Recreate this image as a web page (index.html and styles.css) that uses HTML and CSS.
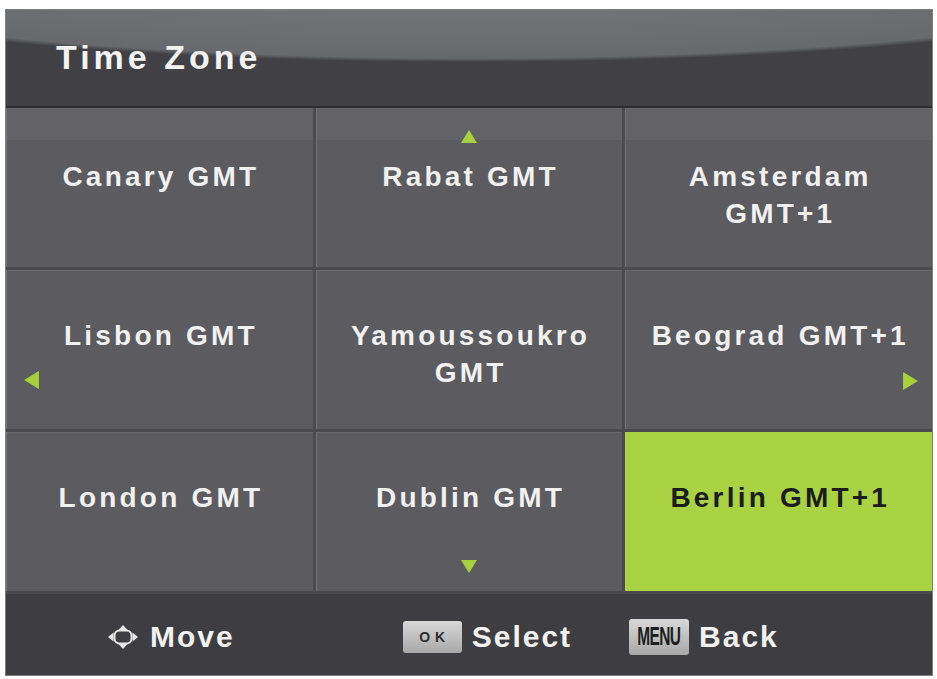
FILE: index.html
```html
<!DOCTYPE html>
<html lang="en">
<head>
<meta charset="utf-8">
<title>Time Zone</title>
<link rel="stylesheet" href="styles.css">
</head>
<body>
<div class="panel">
  <header class="head">
    <h1 class="title">Time Zone</h1>
  </header>
  <div class="grid">
    <div class="cell top">Canary GMT</div>
    <div class="cell top">Rabat GMT
      <svg class="arrow up" viewBox="0 0 16 13"><polygon points="8,0 16,13 0,13"/></svg>
    </div>
    <div class="cell top">Amsterdam<br>GMT+1</div>
    <div class="cell">Lisbon GMT
      <svg class="arrow left" viewBox="0 0 14 17"><polygon points="0,8.5 14,0 14,17"/></svg>
    </div>
    <div class="cell">Yamoussoukro<br>GMT</div>
    <div class="cell">Beograd GMT+1
      <svg class="arrow right" viewBox="0 0 14 17"><polygon points="14,8.5 0,0 0,17"/></svg>
    </div>
    <div class="cell">London GMT</div>
    <div class="cell">Dublin GMT
      <svg class="arrow down" viewBox="0 0 16 13"><polygon points="0,0 16,0 8,13"/></svg>
    </div>
    <div class="cell sel">Berlin GMT+1</div>
  </div>
  <footer class="foot">
    <div class="group">
      <svg class="move-icon" viewBox="0 0 32 24">
        <rect x="7.5" y="5.5" width="17" height="13" rx="5" fill="none" stroke="#e6e6e6" stroke-width="2"/>
        <polygon points="16,0 11.5,5 20.5,5"/>
        <polygon points="16,24 11.5,19 20.5,19"/>
        <polygon points="1,12 6.5,7.5 6.5,16.5"/>
        <polygon points="31,12 25.5,7.5 25.5,16.5"/>
      </svg>
      <span class="ftxt">Move</span>
    </div>
    <div class="group g-select">
      <span class="key key-ok"><span class="ok-txt">OK</span></span>
      <span class="ftxt">Select</span>
    </div>
    <div class="group g-back">
      <span class="key key-menu"><span class="menu-txt">MENU</span></span>
      <span class="ftxt">Back</span>
    </div>
  </footer>
</div>
</body>
</html>
```

FILE: styles.css
```css
* {
  box-sizing: border-box;
}

body {
  margin: 0;
  padding: 9px 4px 0 5px;
  background: #ffffff;
  font-family: "Liberation Sans", Arial, sans-serif;
}

.panel {
  width: 928px;
  height: 667px;
  border: 1px solid #7f7f82;
  background: #3f3f43;
  display: flex;
  flex-direction: column;
}

.head {
  height: 98px;
  flex: none;
  border-bottom: 2px solid #2d2d31;
  padding: 27px 0 0 50px;
  background:
    radial-gradient(760px 96px at 50% -44px, #7b7d81 0%, #67696d 96%, rgba(66, 66, 70, 0) 100%),
    #414145;
}

.title {
  margin: 0;
  font-size: 34px;
  line-height: 40px;
  font-weight: 700;
  letter-spacing: 4px;
  color: #f3f3f3;
}

.grid {
  flex: none;
  height: 486px;
  display: grid;
  grid-template-columns: repeat(3, 1fr);
  grid-template-rows: repeat(3, 159px);
  gap: 3px;
  padding-bottom: 3px;
  background: #4b4b4f;
}

.cell {
  position: relative;
  background: #5b5b60;
  box-shadow: inset 1px 0 0 #747478, inset 0 1px 0 #68686c;
  padding: 47px 6px 0 9.2px;
  text-align: center;
  color: #f1f1f1;
  font-size: 28px;
  line-height: 37px;
  font-weight: 700;
  letter-spacing: 3.2px;
}

.cell.top {
  padding-top: 50px;
  background: linear-gradient(#626267 0, #626267 32px, #5b5b60 32px);
}

.cell.sel {
  background: #a9d342;
  color: #1c1c1c;
  box-shadow: none;
}

.arrow {
  position: absolute;
  fill: #a6d13d;
}

.up {
  width: 16px;
  height: 13px;
  top: 22px;
  left: calc(50% - 8px);
}

.down {
  width: 16px;
  height: 13px;
  bottom: 18px;
  left: calc(50% - 8px);
}

.left {
  width: 15px;
  height: 18px;
  left: 18px;
  top: 101px;
}

.right {
  width: 15px;
  height: 18px;
  right: 14px;
  top: 102px;
}

.foot {
  flex: 1;
  display: flex;
  align-items: center;
  padding: 4px 0 0 101px;
  background: #3e3e42;
}

.group {
  display: flex;
  align-items: center;
  gap: 10px;
}

.group:first-child {
  gap: 11px;
}

.g-select {
  margin-left: 168px;
}

.g-back {
  margin-left: 57px;
}

.move-icon {
  width: 32px;
  height: 24px;
  fill: #e6e6e6;
}

.ftxt {
  font-size: 30px;
  line-height: 34px;
  font-weight: 700;
  letter-spacing: 2px;
  color: #f2f2f2;
}

.key {
  display: flex;
  align-items: center;
  justify-content: center;
  border-radius: 3px;
  background: linear-gradient(#d8d8d8, #a8a8a8);
}

.key-ok {
  width: 59px;
  height: 32px;
}

.ok-txt {
  font-size: 14px;
  font-weight: 700;
  letter-spacing: 5px;
  padding-left: 5px;
  color: #303030;
}

.key-menu {
  width: 60px;
  height: 36px;
  overflow: hidden;
}

.menu-txt {
  display: inline-block;
  font-size: 25px;
  font-weight: 700;
  letter-spacing: -1px;
  color: #1e1e1e;
  transform: scaleX(0.62);
}
```
